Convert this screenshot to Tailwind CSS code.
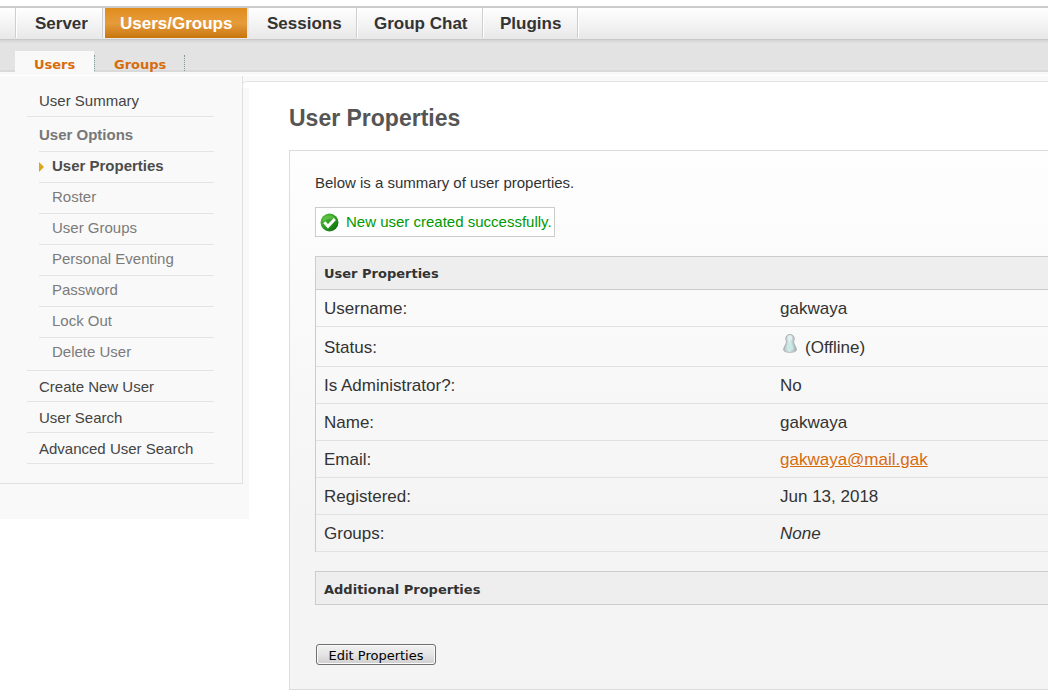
<!DOCTYPE html>
<html lang="en">
<head>
<meta charset="utf-8">
<meta name="viewport" content="width=device-width, initial-scale=1">
<title>User Properties</title>
<script src="https://cdn.jsdelivr.net/npm/@tailwindcss/browser@4"></script>
</head>
<body class="overflow-x-hidden bg-white pt-[6px] font-['Liberation_Sans',Arial,sans-serif] text-[#333]">

<header>
  <nav aria-label="Main" class="flex h-[34px] border-t-2 border-b border-t-[#cccccc] border-b-[#c8c8c8] bg-linear-to-b from-white to-[#e8e8e8] pl-[15px] text-[17px] font-bold leading-[31px]">
    <a href="#" class="mb-px w-[87px] border-l border-[#cfcfcf] pl-[19px] shadow-[inset_1px_0_0_white]">Server</a>
    <span class="mb-px w-[3px] border-l border-[#cfcfcf] bg-[#f4f4f4]"></span>
    <a href="#" class="mb-px w-[142px] bg-linear-to-b from-[#e08c1c] via-[#e69c3a] via-50% to-[#c97508] pl-[15px] text-white">Users/Groups</a>
    <a href="#" class="mb-px w-[109px] border-l-2 border-[#e8e8e8] pl-[18px]">Sessions</a>
    <a href="#" class="mb-px w-[126px] border-l border-[#cfcfcf] pl-[17px] shadow-[inset_1px_0_0_white]">Group Chat</a>
    <a href="#" class="mb-px w-[95px] border-l border-[#cfcfcf] pl-[17px] shadow-[inset_1px_0_0_white]">Plugins</a>
    <span class="mb-px w-[2px] border-l border-[#cfcfcf] bg-white"></span>
  </nav>
  <nav aria-label="Users and groups" class="flex h-[36px] items-end bg-linear-to-b from-[#d4d4d4] from-0% via-[#e3e3e3] via-10% to-[#e3e3e3] pl-[15px] font-['DejaVu_Sans',Verdana,sans-serif] text-[13px] font-bold text-[#d76c0d] shadow-[inset_0_-1px_0_#ffffff,inset_0_-4px_0_#f9f9f9,inset_0_-6px_0_#d9d9d9]">
    <a href="#" class="h-[25px] w-[79px] bg-[#f9f9f9] pl-[19px] leading-[27px] shadow-[inset_0_-1px_0_#ffffff]">Users</a>
    <a href="#" class="mb-[5px] h-[16px] w-[91px] border-x border-dotted border-[#7a9a9a] pl-[19px] leading-[19px]">Groups</a>
  </nav>
</header>

<div class="flex items-start">
  <aside class="relative w-[249px] shrink-0 bg-[#f9f9f9] pb-[35px]">
    <nav aria-label="User administration" class="w-[243px] border-r border-b border-[#e1e1e1] pt-[10px] pr-[28px] pb-[19px] pl-[27px] text-[15px] leading-[30px]">
      <ul class="text-[#444]">
        <li class="border-b border-[#e4e4e4] pl-[12px]"><a href="#">User Summary</a></li>
        <li class="border-b border-[#e4e4e4] pb-[2px] pl-[12px]">
          <span class="block pt-[3px] pb-px font-bold text-[#777]">User Options</span>
          <ul class="text-[#7b7b7b]">
            <li class="flex h-[31px] items-center border-t border-[#e4e4e4] font-bold leading-[28px] text-[#4c4c4c]">
              <svg class="mr-[8px] h-[10px] w-[5px]" viewBox="0 0 5 10" aria-hidden="true"><path d="M0 0l5 5-5 5z" fill="#dba815"/></svg>
              <a href="#" class="h-full">User Properties</a>
            </li>
            <li class="h-[31px] border-t border-[#e4e4e4] pl-[13px] leading-[28px]"><a href="#">Roster</a></li>
            <li class="h-[31px] border-t border-[#e4e4e4] pl-[13px] leading-[28px]"><a href="#">User Groups</a></li>
            <li class="h-[31px] border-t border-[#e4e4e4] pl-[13px] leading-[28px]"><a href="#">Personal Eventing</a></li>
            <li class="h-[31px] border-t border-[#e4e4e4] pl-[13px] leading-[28px]"><a href="#">Password</a></li>
            <li class="h-[31px] border-t border-[#e4e4e4] pl-[13px] leading-[28px]"><a href="#">Lock Out</a></li>
            <li class="h-[31px] border-t border-[#e4e4e4] pl-[13px] leading-[28px]"><a href="#">Delete User</a></li>
          </ul>
        </li>
        <li class="h-[31px] border-b border-[#e4e4e4] pl-[12px] leading-[32px]"><a href="#">Create New User</a></li>
        <li class="h-[31px] border-b border-[#e4e4e4] pl-[12px] leading-[32px]"><a href="#">User Search</a></li>
        <li class="h-[31px] border-b border-[#e4e4e4] pl-[12px] leading-[32px]"><a href="#">Advanced User Search</a></li>
      </ul>
    </nav>
    <span class="absolute top-[5px] right-0 h-[7px] w-[7px] rounded-tl-[5px] border-t border-l border-[#e4e4e4] bg-white"></span>
  </aside>

  <main class="min-w-0 flex-1 shadow-[inset_0_5px_0_#f9f9f9,inset_0_6px_0_#e4e4e4] pt-[26px] pl-[40px]">
    <h1 class="text-[23px] font-bold leading-[32px] text-[#555]">User Properties</h1>

    <div class="mt-[16px] border border-r-0 border-[#dcdcdc] bg-[#f4f4f4] bg-linear-to-b from-[#fefefe] to-[#f4f4f4] to-70% pt-[22px] pb-[24px] pl-[25px]">
      <p class="text-[15px] leading-[20px]">Below is a summary of user properties.</p>

      <div role="status" class="mt-[14px] flex h-[30px] w-[240px] items-center gap-[7px] border border-[#ccc] bg-white pl-[4px] text-[15px] whitespace-nowrap text-[#090]">
        <svg class="h-[19px] w-[19px] shrink-0" viewBox="0 0 19 19" aria-hidden="true">
          <defs><linearGradient id="ok" x1="0" y1="0" x2="1" y2="1"><stop offset="0" stop-color="#5cc43c"/><stop offset=".5" stop-color="#2f9e22"/><stop offset="1" stop-color="#07600a"/></linearGradient></defs>
          <circle cx="9.5" cy="9.5" r="9" fill="url(#ok)"/>
          <path d="M2.500 8.500A7 7 0 0 1 16 7Q12 4 2.500 8.500z" fill="#8ad86c" opacity=".4"/>
          <path d="M4.300 9.300l3.700 3.900L14.800 6" fill="none" stroke="#fff" stroke-width="3"/>
        </svg>
        New user created successfully.
      </div>

      <table class="mt-[19px] w-full border-separate border-spacing-0 border-l border-[#ccc] text-left text-[17px]">
        <thead>
          <tr><th colspan="2" class="h-[34px] border-y border-[#ccc] bg-[#eee] pt-[2px] pl-[8px] font-['DejaVu_Sans',Verdana,sans-serif] text-[13px] font-bold">User Properties</th></tr>
        </thead>
        <tbody>
          <tr><th scope="row" class="h-[37px] w-[456px] border-b border-[#e1e1e1] pt-[2px] pl-[8px] font-normal">Username:</th><td class="border-b border-[#e1e1e1] pt-[2px] pl-[8px]">gakwaya</td></tr>
          <tr><th scope="row" class="h-[40px] border-b border-[#e1e1e1] pt-[2px] pl-[8px] font-normal">Status:</th><td class="border-b border-[#e1e1e1] pl-[8px]">
            <div class="flex items-start gap-[8px]">
              <svg class="ml-[3px] h-[19px] w-[14px]" viewBox="0 0 14 19" aria-hidden="true">
                <defs><linearGradient id="off"><stop offset="0" stop-color="#aebaba"/><stop offset=".45" stop-color="#dcefed"/><stop offset="1" stop-color="#a5b0b0"/></linearGradient></defs>
                <path d="M7 .5C4.300.5 2.800 2.300 2.800 4.800c0 1.300.3 2.200.7 3C3.200 10.500.8 13 .6 15.600.5 17.500 3.500 18.300 7 18.300s6.500-.8 6.400-2.700C13.200 13 10.800 10.500 10.500 7.800c.4-.8.7-1.700.7-3C11.200 2.300 9.700.5 7 .5z" fill="url(#off)" stroke="#a3adad" stroke-width=".9"/>
                <ellipse cx="7" cy="4.200" rx="2.200" ry="2.400" fill="#e4f0ef"/>
                <path d="M5.500 8.500C5 11.500 3.500 13 3.500 15q3.500 1.200 7 0C10.500 13 9 11.500 8.500 8.500z" fill="#c9eae8"/>
              </svg>
              <span class="pt-[2px] leading-[24px]">(Offline)</span>
            </div></td></tr>
          <tr><th scope="row" class="h-[37px] border-b border-[#e1e1e1] pt-[2px] pl-[8px] font-normal">Is Administrator?:</th><td class="border-b border-[#e1e1e1] pt-[2px] pl-[8px]">No</td></tr>
          <tr><th scope="row" class="h-[37px] border-b border-[#e1e1e1] pt-[2px] pl-[8px] font-normal">Name:</th><td class="border-b border-[#e1e1e1] pt-[2px] pl-[8px]">gakwaya</td></tr>
          <tr><th scope="row" class="h-[37px] border-b border-[#e1e1e1] pt-[2px] pl-[8px] font-normal">Email:</th><td class="border-b border-[#e1e1e1] pt-[2px] pl-[8px]"><a href="mailto:gakwaya@mail.gak" class="text-[#d76c0d] underline">gakwaya@mail.gak</a></td></tr>
          <tr><th scope="row" class="h-[37px] border-b border-[#e1e1e1] pt-[2px] pl-[8px] font-normal">Registered:</th><td class="border-b border-[#e1e1e1] pt-[2px] pl-[8px]">Jun 13, 2018</td></tr>
          <tr><th scope="row" class="h-[37px] border-b border-[#e1e1e1] pt-[2px] pl-[8px] font-normal">Groups:</th><td class="border-b border-[#e1e1e1] pt-[2px] pl-[8px]"><em>None</em></td></tr>
        </tbody>
      </table>

      <h2 class="mt-[19px] h-[34px] border border-r-0 border-[#ccc] bg-[#eee] pl-[8px] font-['DejaVu_Sans',Verdana,sans-serif] text-[13px] font-bold leading-[35px]">Additional Properties</h2>

      <button type="button" class="mt-[39px] ml-px block h-[21px] w-[120px] rounded-[3px] border border-[#707070] bg-linear-to-b from-[#f2f2f2] from-0% via-[#e4e4e4] via-50% to-[#cfcfcf] pt-px font-['DejaVu_Sans',Verdana,sans-serif] text-[13px] leading-[19px] whitespace-nowrap text-black shadow-[inset_0_0_0_1px_#fafafa]">Edit Properties</button>
    </div>
  </main>
</div>
</body>
</html>
